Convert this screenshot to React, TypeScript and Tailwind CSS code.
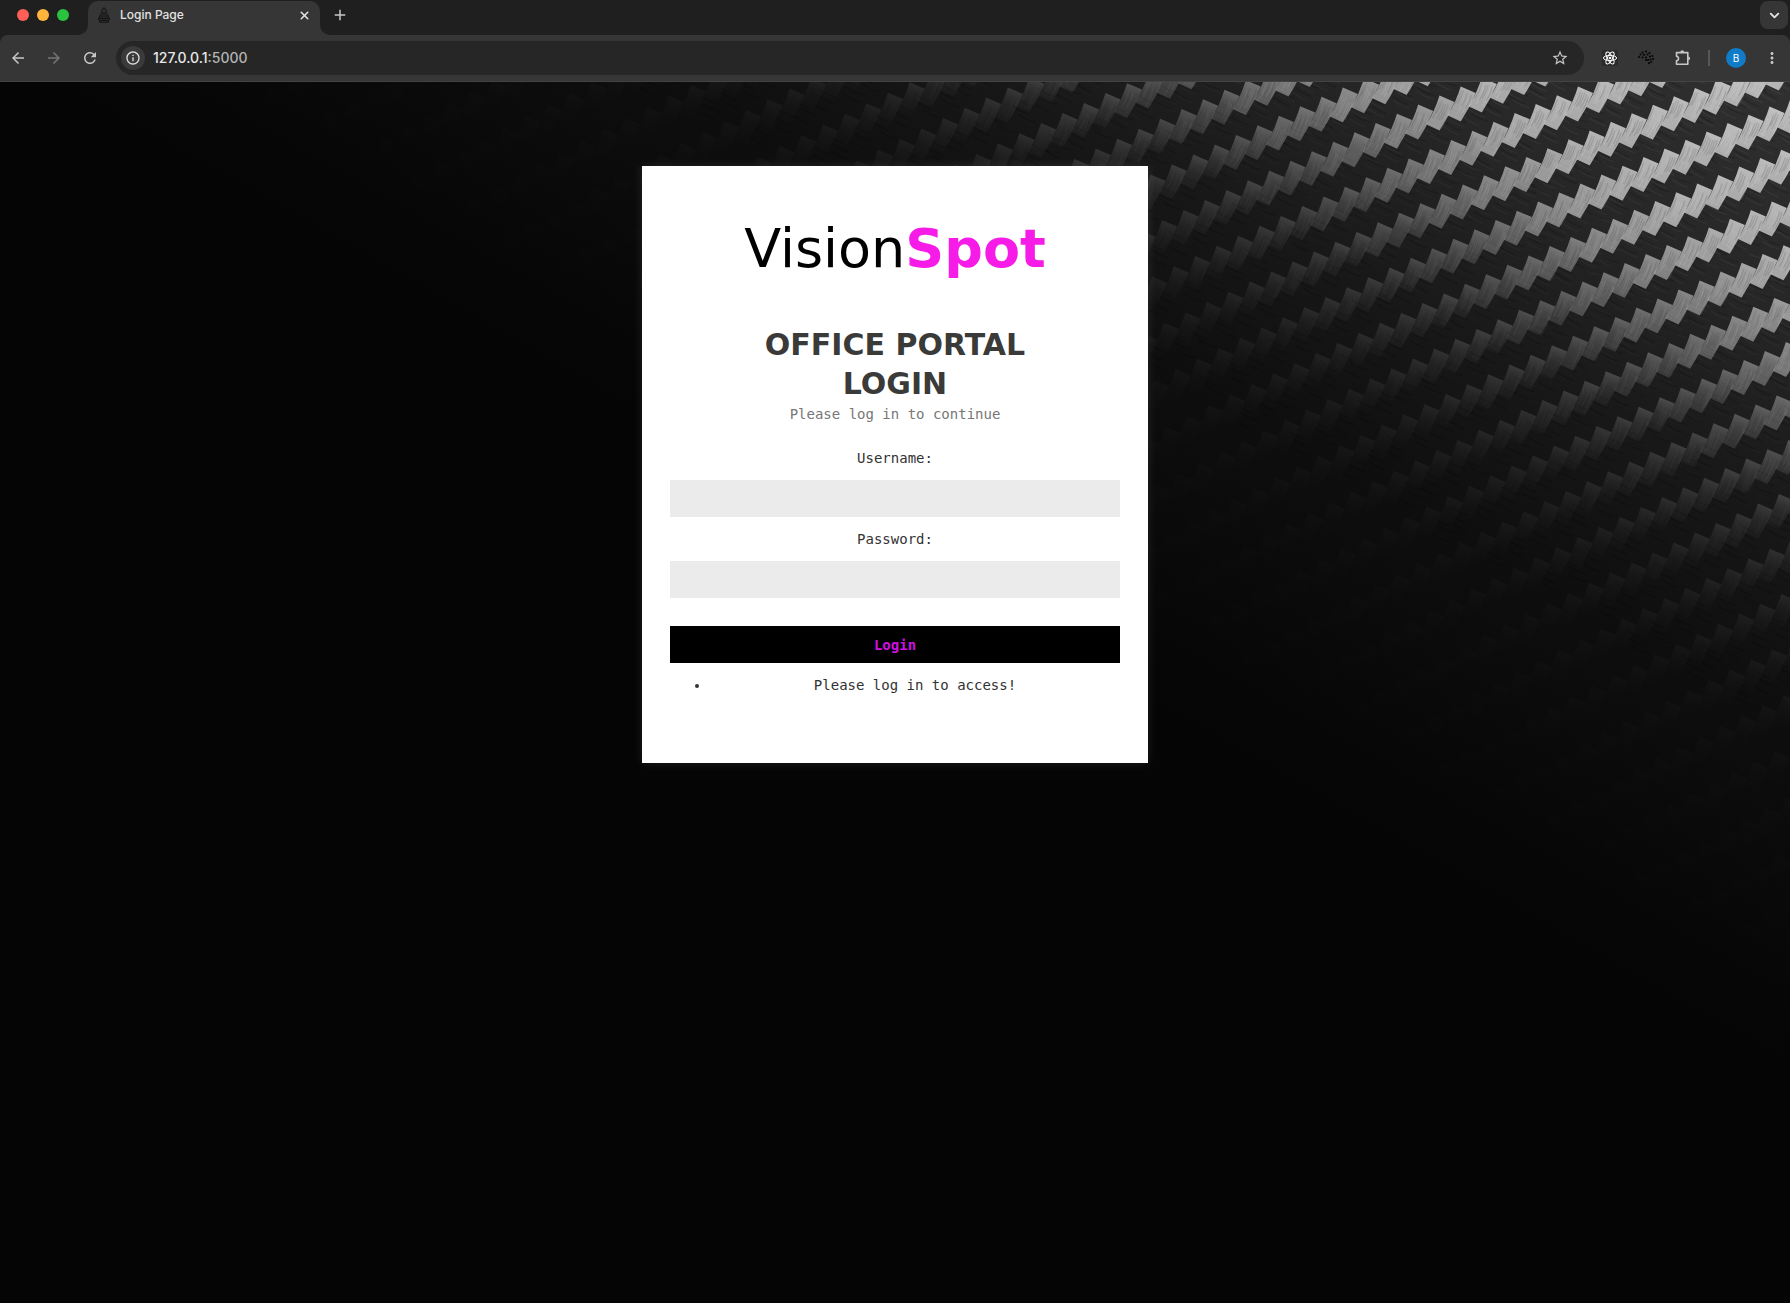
import React from "react";
import { ChevronDown, X } from "lucide-react";
import { MdArrowBack, MdArrowForward, MdRefresh, MdStarOutline, MdAdd, MdMoreVert, MdInfoOutline } from "react-icons/md";

type Tile = { x: number; y: number; level: number; seed: number };

function noise(n: number): number {
  const v = Math.sin(n * 127.1) * 43758.5453;
  return v - Math.floor(v);
}

/* Brightness of the weave, falling away from the top right corner. */
function brightness(x: number, y: number): number {
  const d = -(0.493 * (x - 1790) - 0.87 * y);
  const stops: [number, number][] = [
    [0, 0.72], [150, 0.66], [210, 0.52], [270, 0.36], [330, 0.23], [400, 0.13], [480, 0.06], [570, 0.022], [700, 0.006], [900, 0],
  ];
  if (d <= 0) return 0.72;
  for (let k = 1; k < stops.length; k++) {
    const [d1, b1] = stops[k];
    const [d0, b0] = stops[k - 1];
    if (d <= d1) return b0 + ((b1 - b0) * (d - d0)) / (d1 - d0);
  }
  return 0;
}

function weave(): Tile[] {
  const tiles: Tile[] = [];
  for (let j = -32; j <= 22; j++) {
    for (let i = -60; i <= 70; i++) {
      const x = 1397 + 21.25 * i - 0.01 * i * i + 11.67 * j;
      const y = 31.7 - 9.2 * i + 0.044 * i * i + 44.6 * j - 0.12 * i * j + 0.08 * j * j;
      if (x < 0 || x > 1815 || y < -40 || y > 1000) continue;
      const level = brightness(x, y);
      if (level > 0.004) tiles.push({ x, y, level, seed: i * 57 + j * 131 });
    }
  }
  return tiles;
}

const TILES = weave();
const FADES = [0, 0.12, 0.35, 0.6, 0.78, 0.88];

function CarbonFibre() {
  return (
    <svg className="absolute inset-0 h-full w-full" viewBox="0 0 1790 1221" preserveAspectRatio="xMaxYMin slice" aria-hidden="true">
      <defs>
        <linearGradient id="base" gradientUnits="userSpaceOnUse" x1="1790" y1="0" x2="1370" y2="741">
          <stop offset="0" stopColor="#303030" />
          <stop offset="0.25" stopColor="#262626" />
          <stop offset="0.45" stopColor="#181818" />
          <stop offset="0.65" stopColor="#0e0e0e" />
          <stop offset="1" stopColor="#050505" />
        </linearGradient>
        {FADES.map((f, k) => (
          <linearGradient key={k} id={`fade${k}`} x1="0.65" y1="0" x2="0.35" y2="1">
            <stop offset="0" stopColor="#fff" stopOpacity="1" />
            <stop offset="0.45" stopColor="#fff" stopOpacity={0.38 + f * 0.62} />
            <stop offset="1" stopColor="#fff" stopOpacity={f} />
          </linearGradient>
        ))}
      </defs>
      <rect width="1790" height="1221" fill="url(#base)" />
      {TILES.map((t) => {
        const fade = Math.min(5, Math.floor(t.level * 9));
        return (
          <g key={t.seed} transform={`translate(${t.x.toFixed(1)} ${t.y.toFixed(1)})`}>
            {t.level > 0.03 &&
              [0, 1, 2, 3, 4, 5].map((k) => {
                const r = noise(t.seed + k * 7.3);
                const sx = 3 + r * 10;
                const sy = 11 + k * 4;
                return (
                  <path
                    key={k}
                    d={`M${sx} ${sy}q8 6 ${14 + r * 4} 8`}
                    fill="none"
                    stroke={k % 2 ? "#fff" : "#000"}
                    strokeWidth="1.4"
                    opacity={k % 2 ? t.level * 0.07 : 0.16}
                  />
                );
              })}
            <path d="M0 0L15 6.400Q8.500 22 0 35L-13 29Q-4.500 15 0 0Z" fill={`url(#fade${fade})`} opacity={t.level} />
            {t.level > 0.06 &&
              [0, 1, 2, 3, 4, 5].map((k) => {
                const r = noise(t.seed + k * 3.7 + 1);
                const ox = 1.5 + k * 2.3;
                const top = 2 + ox * 0.4 + r * 9;
                return (
                  <path
                    key={`s${k}`}
                    d={`M${ox - top * 0.25} ${top}q-2 ${7 + r * 3} -${6 + r * 2} ${13 + r * 6}`}
                    fill="none"
                    stroke={r > 0.5 ? "#fff" : "#000"}
                    strokeWidth="1.2"
                    opacity={t.level * 0.17}
                  />
                );
              })}
          </g>
        );
      })}
    </svg>
  );
}

function Buddha() {
  return (
    <svg className="h-4 w-4" viewBox="0 0 16 16" fill="none" stroke="#0c0c0c" strokeWidth="1" aria-hidden="true">
      <path d="M8 .3v1.500M6.200 5.500C5.400 2 7 1.700 8 1.700s2.600.3 1.800 3.800c-.6 1-3 1-3.600 0ZM6.200 6C4 6.700 4.200 8 3.500 11M9.800 6c2.200.7 2 2 2.700 5M6 7.500v3.700M10 7.500v3.700M8 6.500v4.200M2.500 11.300c1.500-.8 4 .6 5.500.6s4-1.400 5.500-.6c.8 1-.5 1.900-1.500 1.900H4c-1 0-2.300-.9-1.500-1.900ZM3.800 13.500v1.700h8.400v-1.700" />
    </svg>
  );
}

function Atom() {
  return (
    <svg className="h-4 w-4 bg-[#2b2b2b]" viewBox="0 0 16 16" fill="none" stroke="#fff" strokeWidth="1" aria-hidden="true">
      <ellipse cx="8" cy="8" rx="6.6" ry="2.6" />
      <ellipse cx="8" cy="8" rx="6.6" ry="2.6" transform="rotate(60 8 8)" />
      <ellipse cx="8" cy="8" rx="6.6" ry="2.6" transform="rotate(120 8 8)" />
      <circle cx="8" cy="8" r="1.3" fill="#fff" stroke="none" />
    </svg>
  );
}

const DOTS: [number, number][] = [
  [4.5, 2.5], [8, 1.5], [11.5, 3], [2.5, 4.5], [6, 4.8], [9.5, 4.5], [1, 7], [4.5, 7.5], [8, 7.5], [12, 6.5], [14.5, 6], [10, 10], [12.5, 9.5], [15, 9], [8, 10], [11, 13.2], [13.3, 12],
];

function DotCluster() {
  return (
    <svg className="h-4 w-4" viewBox="0 0 16 16" aria-hidden="true">
      {DOTS.map(([x, y]) => (
        <circle key={`${x}-${y}`} cx={x} cy={y} r="1.1" fill="#080808" />
      ))}
    </svg>
  );
}

function Puzzle() {
  return (
    <svg className="h-[18px] w-[18px]" viewBox="0 0 18 18" fill="none" stroke="currentColor" strokeWidth="1.6" strokeLinejoin="round" aria-hidden="true">
      <path d="M2.500 3.600h11.300v11.600H2.500v-3.400c2.700-.4 2.700-4.200 0-4.600Z" />
      <path d="M6.300 3.200a1.900 1.900 0 0 1 3.800 0ZM14.200 7.400a1.900 1.900 0 0 1 0 3.800Z" fill="currentColor" stroke="none" />
    </svg>
  );
}

const iconButton = "flex shrink-0 items-center justify-center [&>svg]:shrink-0";

function TabStrip() {
  return (
    <div className="flex h-[35px] items-stretch bg-[#1f1f1f] pr-0.5">
      <div className="flex h-[30px] w-[88px] shrink-0 items-center gap-2 pl-[17px]">
        <span className="h-3 w-3 rounded-full bg-[#ff5f57]" />
        <span className="h-3 w-3 rounded-full bg-[#ffb43c]" />
        <span className="h-3 w-3 rounded-full bg-[#2ac23f]" />
      </div>
      <div className="relative mt-px flex w-[232px] shrink-0 items-center rounded-t-[10px] bg-[#363636] pr-2 pb-1.5 pl-2">
        <svg className="absolute bottom-0 -left-2.5 h-2.5 w-2.5" viewBox="0 0 10 10" aria-hidden="true">
          <path d="M10 0v10H0A10 10 0 0 0 10 0Z" fill="#363636" />
        </svg>
        <svg className="absolute -right-2.5 bottom-0 h-2.5 w-2.5" viewBox="0 0 10 10" aria-hidden="true">
          <path d="M0 0v10h10A10 10 0 0 1 0 0Z" fill="#363636" />
        </svg>
        <Buddha />
        <span className="ml-2 flex-1 text-xs font-medium text-[#e3e3e3]">Login Page</span>
        <button type="button" aria-label="Close tab" className={`${iconButton} h-4 w-4 text-[#dedede]`}>
          <X size={13} strokeWidth={3} />
        </button>
      </div>
      <button type="button" aria-label="New tab" className={`${iconButton} ml-3 h-[30px] w-4 text-[#c7c7c7]`}>
        <MdAdd size={18} />
      </button>
      <button type="button" aria-label="Search tabs" className={`${iconButton} mt-px ml-auto h-7 w-7 rounded-lg bg-[#363636] text-[#e3e3e3]`}>
        <ChevronDown size={15} strokeWidth={3} />
      </button>
    </div>
  );
}

function Toolbar() {
  return (
    <div className="bg-[#1f1f1f]">
      <div className="flex h-[47px] items-center rounded-t-lg border-b border-[#434343] bg-[#363636]">
        <div className="flex w-[116px] shrink-0 items-center gap-5 pl-2.5">
          <button type="button" aria-label="Back" className={`${iconButton} h-4 w-4 text-[#c7c7c7]`}>
            <MdArrowBack size={18} />
          </button>
          <button type="button" aria-label="Forward" className={`${iconButton} h-4 w-4 text-[#767676]`}>
            <MdArrowForward size={18} />
          </button>
          <button type="button" aria-label="Reload" className={`${iconButton} h-4 w-4 text-[#c7c7c7]`}>
            <MdRefresh size={18} />
          </button>
        </div>
        <div className="flex h-[34px] flex-1 items-center rounded-full bg-[#262626] px-[5px] text-sm font-medium">
          <button type="button" aria-label="Site information" className={`${iconButton} h-6 w-6 rounded-full bg-[#3a3a3a] text-[#dedede]`}>
            <MdInfoOutline size={16} />
          </button>
          <span className="ml-2 flex-1 text-[#b4b4b4]">
            <span className="text-[#e8e8e8]">127.0.0.1</span>:5000
          </span>
          <button type="button" aria-label="Bookmark" className={`${iconButton} mr-2.5 h-[18px] w-[18px] text-[#c7c7c7]`}>
            <MdStarOutline size={18} />
          </button>
        </div>
        <div className="flex shrink-0 items-center pl-[18px] pr-[9px]">
          <button type="button" aria-label="React tools" className={iconButton}>
            <Atom />
          </button>
          <button type="button" aria-label="Cluster extension" className={`${iconButton} ml-5`}>
            <DotCluster />
          </button>
          <button type="button" aria-label="Extensions" className={`${iconButton} ml-5 text-[#c7c7c7]`}>
            <Puzzle />
          </button>
          <span className="ml-4 h-4 w-0.5 bg-[#575757]" />
          <button type="button" aria-label="Profile" className={`${iconButton} ml-4 h-5 w-5 rounded-full bg-[#107cc8] text-[10px] text-white`}>
            B
          </button>
          <button type="button" aria-label="Menu" className={`${iconButton} ml-[17px] text-[#c7c7c7]`}>
            <MdMoreVert size={18} />
          </button>
        </div>
      </div>
    </div>
  );
}

function Field({ id, label, type }: { id: string; label: string; type: string }) {
  return (
    <>
      <label htmlFor={id} className="mb-[11px] block">
        {label}
      </label>
      <input id={id} name={id} type={type} className="mb-[11px] block h-[37px] w-full bg-[#ebebeb] px-2.5 outline-none" />
    </>
  );
}

function LoginCard() {
  return (
    <section className="relative mx-auto mt-[84px] w-full max-w-[506px] bg-white px-7 pt-[51px] pb-[67px] text-center font-['DejaVu_Sans_Mono',monospace] text-sm leading-[22px] text-[#333] shadow-[0_0_10px_rgba(255,255,255,0.1)]">
      <div className="font-['DejaVu_Sans',sans-serif] text-[54px] leading-[64px] text-black">
        Vision<strong className="font-bold text-[#f71be8]">Spot</strong>
      </div>
      <h1 className="mx-auto mt-11 max-w-xs font-['DejaVu_Sans',sans-serif] text-3xl leading-[39px] font-bold text-[#3a3a38]">
        OFFICE PORTAL LOGIN
      </h1>
      <p className="mb-[22px] text-[#777]">Please log in to continue</p>
      <form onSubmit={(e) => e.preventDefault()}>
        <Field id="username" label="Username:" type="text" />
        <Field id="password" label="Password:" type="password" />
        <button type="submit" className="mt-7 block h-[37px] w-full bg-black font-bold text-[#d10fe0]">
          Login
        </button>
      </form>
      <ul className="mt-[11px] list-disc pl-10">
        <li>Please log in to access!</li>
      </ul>
    </section>
  );
}

export default function App() {
  return (
    <div className="flex min-h-screen flex-col bg-[#050505] font-['Inter',sans-serif]">
      <header>
        <TabStrip />
        <Toolbar />
      </header>
      <main className="relative flex-1 overflow-hidden">
        <CarbonFibre />
        <LoginCard />
      </main>
    </div>
  );
}
